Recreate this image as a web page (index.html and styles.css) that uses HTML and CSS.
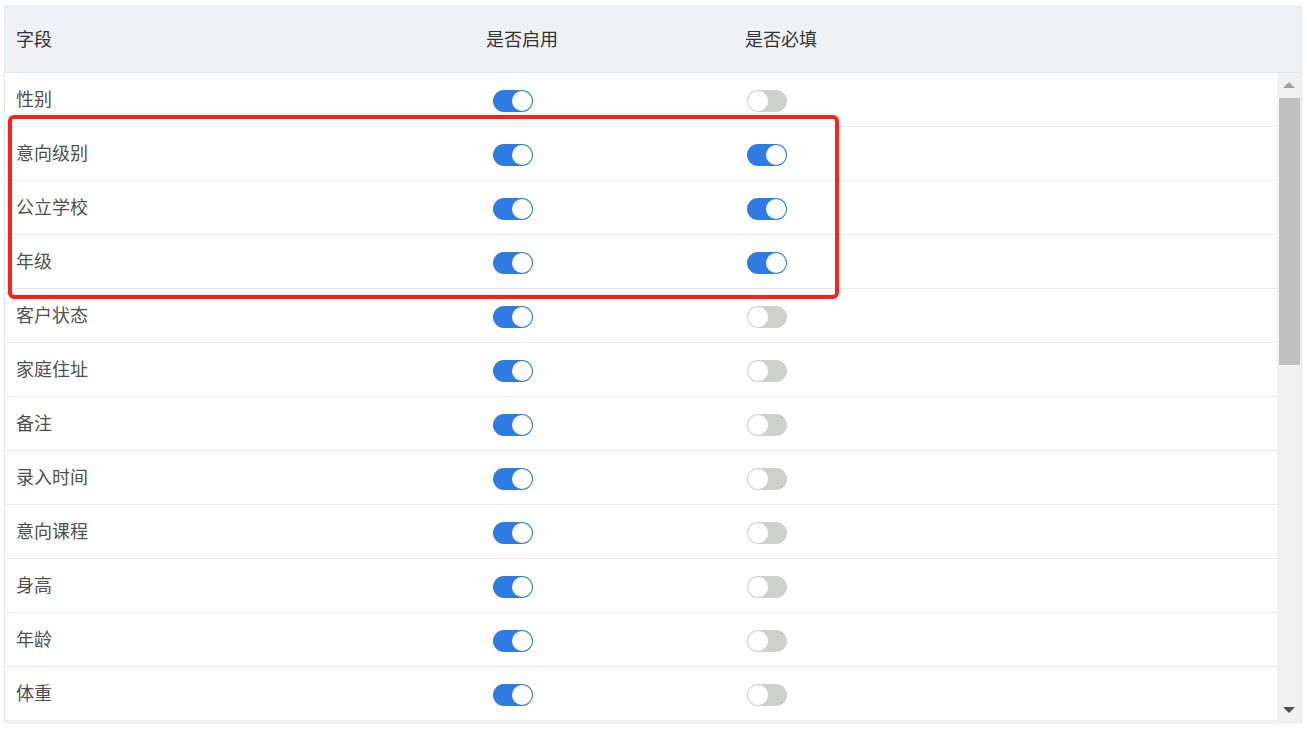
FILE: index.html
```html
<!DOCTYPE html>
<html lang="zh-CN">
  <head>
    <meta charset="UTF-8">
    <title>字段设置</title>
    <link rel="stylesheet" href="styles.css">
  </head>
  <body>
    <div class="field-table">
      <div class="table-head row-grid">
        <div class="head-cell">字段</div>
        <div class="head-cell">是否启用</div>
        <div class="head-cell">是否必填</div>
      </div>
      <div class="table-body">
        <div class="row-list">
          <div class="row row-grid"><div class="name">性别</div><div class="c2"><span class="switch on"></span></div><div class="c3"><span class="switch"></span></div></div>
          <div class="row row-grid"><div class="name">意向级别</div><div class="c2"><span class="switch on"></span></div><div class="c3"><span class="switch on"></span></div></div>
          <div class="row row-grid"><div class="name">公立学校</div><div class="c2"><span class="switch on"></span></div><div class="c3"><span class="switch on"></span></div></div>
          <div class="row row-grid"><div class="name">年级</div><div class="c2"><span class="switch on"></span></div><div class="c3"><span class="switch on"></span></div></div>
          <div class="row row-grid"><div class="name">客户状态</div><div class="c2"><span class="switch on"></span></div><div class="c3"><span class="switch"></span></div></div>
          <div class="row row-grid"><div class="name">家庭住址</div><div class="c2"><span class="switch on"></span></div><div class="c3"><span class="switch"></span></div></div>
          <div class="row row-grid"><div class="name">备注</div><div class="c2"><span class="switch on"></span></div><div class="c3"><span class="switch"></span></div></div>
          <div class="row row-grid"><div class="name">录入时间</div><div class="c2"><span class="switch on"></span></div><div class="c3"><span class="switch"></span></div></div>
          <div class="row row-grid"><div class="name">意向课程</div><div class="c2"><span class="switch on"></span></div><div class="c3"><span class="switch"></span></div></div>
          <div class="row row-grid"><div class="name">身高</div><div class="c2"><span class="switch on"></span></div><div class="c3"><span class="switch"></span></div></div>
          <div class="row row-grid"><div class="name">年龄</div><div class="c2"><span class="switch on"></span></div><div class="c3"><span class="switch"></span></div></div>
          <div class="row row-grid"><div class="name">体重</div><div class="c2"><span class="switch on"></span></div><div class="c3"><span class="switch"></span></div></div>
        </div>
        <div class="scrollbar">
          <div class="arrow up"></div>
          <div class="thumb"></div>
          <div class="track"></div>
          <div class="arrow down"></div>
        </div>
      </div>
      <div class="highlight"></div>
    </div>
  </body>
</html>
```

FILE: styles.css
```css
body {
  margin: 0;
  font-family: "Noto Sans CJK SC", "Noto Sans", sans-serif;
  background: #fff;
}

.field-table {
  position: relative;
  margin: 6px 0 0 4px;
  width: 1298px;
  box-sizing: border-box;
  border: 1px solid #e3e5ec;
}

.row-grid {
  display: grid;
  grid-template-columns: 470px 259px 1fr;
  align-items: center;
}

.table-head {
  height: 65px;
  background: #f0f1f5;
  border-bottom: 1px solid #e3e5ec;
  color: #333;
  font-size: 18px;
}
.head-cell {
  padding-left: 11px;
  padding-bottom: 4px;
}

.table-body {
  display: flex;
  height: 649px;
}
.row-list {
  flex: 1;
  overflow: hidden;
}
.row {
  height: 53px;
  border-bottom: 1px solid #e6e8ee;
  color: #4f4f4f;
  font-size: 18px;
  > .name {
    padding-left: 11px;
    padding-bottom: 4px;
  }
  > .c2 {
    padding-left: 18px;
  }
  > .c3 {
    padding-left: 13px;
  }
  > .c2, > .c3 {
    display: flex;
    padding-top: 3px;
  }
}

.switch {
  display: flex;
  box-sizing: border-box;
  width: 40px;
  height: 22px;
  padding: 1px;
  border-radius: 11px;
  background: #cdd0cd;
  &::after {
    content: "";
    width: 20px;
    height: 20px;
    border-radius: 50%;
    background: #fff;
  }
}
.switch.on {
  background: #2e7be3;
  justify-content: flex-end;
}

.scrollbar {
  width: 24px;
  display: flex;
  flex-direction: column;
  align-items: center;
  background: #f1f1f1;
}
.arrow {
  height: 24px;
  width: 100%;
  display: flex;
  align-items: center;
  justify-content: center;
  &::after {
    content: "";
    border-left: 6px solid transparent;
    border-right: 6px solid transparent;
  }
}
.arrow.up::after {
  border-bottom: 6px solid #a3a3a3;
}
.arrow.down::after {
  border-top: 6px solid #505050;
}
.thumb {
  margin-top: 1px;
  width: 21px;
  height: 267px;
  background: #c1c1c1;
}
.track {
  flex: 1;
}

.highlight {
  position: absolute;
  left: 3px;
  top: 108px;
  width: 831px;
  height: 184px;
  box-sizing: border-box;
  border: 4px solid #ff1f1f;
  border-radius: 6px;
}
```
